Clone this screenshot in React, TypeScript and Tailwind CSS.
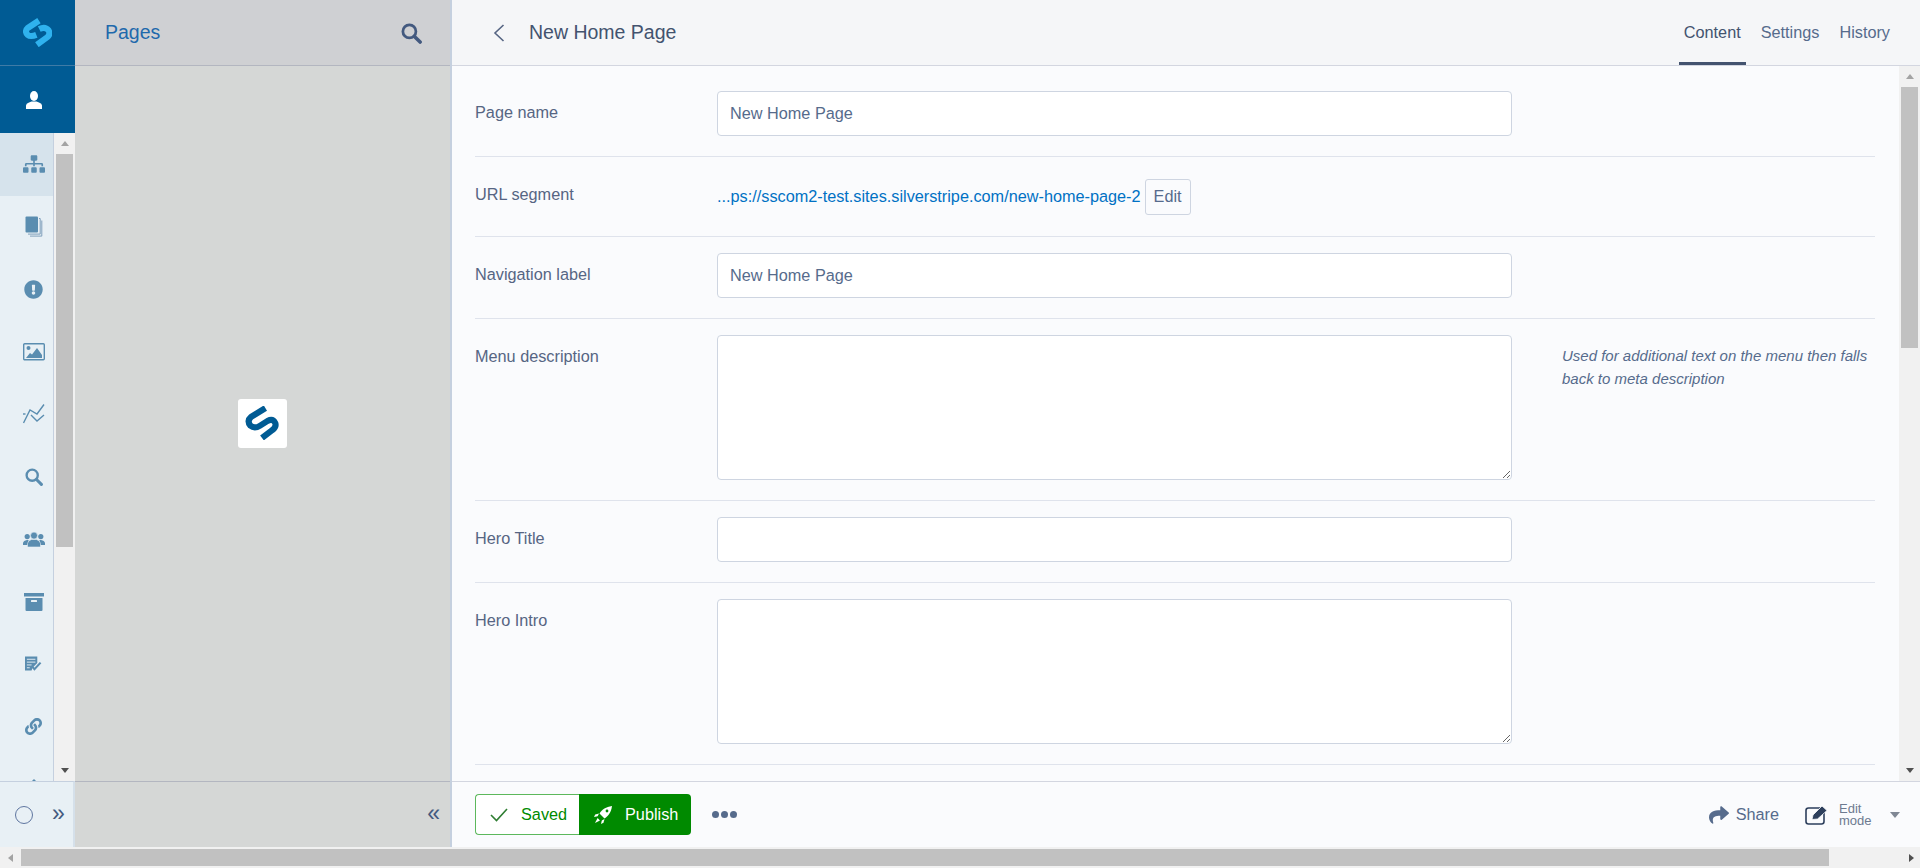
import React from 'react';
import { FaSitemap, FaExclamationCircle, FaLink, FaShare, FaArrowUp } from 'react-icons/fa';

const TopLogo = () => (
  <svg viewBox="0 0 100 100" className="w-[29px] h-[29px]" fill="none" stroke="#2fb2ee" strokeWidth="21" strokeLinejoin="round">
    <path d="M55 9 L17 34 Q4 46 16 58 Q26 66 46 58" />
    <path d="M56 38 Q76 28 88 42 Q96 56 84 66 L48 92" />
  </svg>
);

const PanelLogo = () => (
  <svg viewBox="0 0 100 100" className="w-[34px] h-[34px]" fill="none" stroke="#005b94" strokeWidth="18" strokeLinejoin="round">
    <path d="M60 6 L18 32 Q4 44 16 58 Q28 68 44 58 L66 44 Q82 36 89 50 Q93 62 80 71 L50 94" />
  </svg>
);

const PagesIcon = () => (
  <svg viewBox="0 0 18 21" className="w-[18px] h-[21px]">
    <rect x="0.5" y="0.5" width="12.5" height="16" rx="1" fill="#5a8db0" />
    <path d="M14 2.5h1.2v15.6H3M16.8 4.5v15.6H5" fill="none" stroke="#7f9fbb" strokeWidth="1" />
  </svg>
);

const ImageIcon = () => (
  <svg viewBox="0 0 22 18" className="w-[22px] h-[18px]">
    <rect x="0.7" y="0.7" width="20.6" height="16" rx="1" fill="none" stroke="#5a8db0" strokeWidth="1.4" />
    <circle cx="5.5" cy="5" r="2" fill="#5a8db0" />
    <path d="M3 15 L7 10 L9 11.5 L14 5 L19 12 V15Z" fill="#5a8db0" />
  </svg>
);

const ChartIcon = () => (
  <svg viewBox="0 0 22 20" className="w-[22px] h-[20px]" fill="none" stroke="#5a8db0" strokeWidth="1.4">
    <path d="M0.5 19 L7 6 L14 10 L21 0.5" />
    <path d="M8 11 L14 17 L21 11" />
    <path d="M0 10 H2.5" />
  </svg>
);

const SearchIcon = ({ color, className }: { color: string; className: string }) => (
  <svg viewBox="0 0 20 20" className={className} fill="none" stroke={color}>
    <circle cx="8" cy="8" r="6.2" strokeWidth="2.6" />
    <path d="M12.8 12.8 L18.2 18.2" strokeWidth="3.4" strokeLinecap="round" />
  </svg>
);

const UsersIcon = () => (
  <svg viewBox="0 0 22 15" className="w-[22px] h-[15px]" fill="#5a8db0">
    <circle cx="4.2" cy="4.6" r="2.6" />
    <circle cx="17.8" cy="4.6" r="2.6" />
    <path d="M0 13 V11 Q0.5 8.5 4 8 L5.5 8 V13Z" />
    <path d="M22 13 V11 Q21.5 8.5 18 8 L16.5 8 V13Z" />
    <circle cx="11" cy="3.6" r="3.5" stroke="#e8f0f5" strokeWidth="0.6" />
    <path d="M4.5 15 V11.5 Q5 8.5 8.5 7.5 H13.5 Q17 8.5 17.5 11.5 V15Z" stroke="#e8f0f5" strokeWidth="0.6" />
  </svg>
);

const ArchiveIcon = () => (
  <svg viewBox="0 0 20 18" className="w-[20px] h-[18px]">
    <rect x="0" y="0" width="20" height="3.5" fill="#5a8db0" />
    <path d="M1.5 5 H18.5 V17 Q18.5 18 17.5 18 H2.5 Q1.5 18 1.5 17Z" fill="#5a8db0" />
    <rect x="7" y="7" width="6" height="2" rx="0.5" fill="#e8f0f5" />
  </svg>
);

const ReportIcon = () => (
  <svg viewBox="0 0 18 16" className="w-[17px] h-[16px]">
    <path d="M0 0 H13 V7 L8 12 L7 15 H0Z" fill="#5a8db0" />
    <path d="M2 3h9M2 6h9M2 9h5M2 12h3" stroke="#e8f0f5" strokeWidth="1" />
    <path d="M7 10 L10 13.5 L16.5 6.5" fill="none" stroke="#5a8db0" strokeWidth="2.2" />
  </svg>
);

const ProfileIcon = () => (
  <svg viewBox="0 0 16 18" className="w-[16px] h-[18px]" fill="#ffffff">
    <ellipse cx="8" cy="5" rx="4" ry="5" />
    <path d="M0 18 V14.5 Q0 12.5 3 11.5 L5.5 10.5 H10.5 L13 11.5 Q16 12.5 16 14.5 V18Z" />
  </svg>
);

const RocketIcon = () => (
  <svg viewBox="0 0 18 18" className="w-[18px] h-[18px] mr-[13px]" fill="#ffffff">
    <path d="M18 0 C12 0.8 8 3.5 5.5 7.5 L10.5 12.5 C14.5 10 17.2 6 18 0Z" />
    <circle cx="13" cy="5" r="1.4" fill="#008a00" />
    <path d="M5 7.5 L1.2 8.5 L0 11 L3.6 10.2Z" />
    <path d="M10.5 13 L9.5 16.8 L7 18 L7.8 14.4Z" />
    <path d="M3.6 12 L6 14.4 L1 17Z" />
  </svg>
);

const ArrowUp = ({ color }: { color: string }) => (
  <div className="w-0 h-0 border-x-[4.5px] border-x-transparent border-b-[5px]" style={{ borderBottomColor: color }} />
);
const ArrowDown = () => (
  <div className="w-0 h-0 border-x-[4.5px] border-x-transparent border-t-[5px] border-t-[#505050]" />
);

const menuIcons = [
  <FaSitemap size={22} color="#5a8db0" />,
  <PagesIcon />,
  <FaExclamationCircle size={19} color="#5a8db0" />,
  <ImageIcon />,
  <ChartIcon />,
  <SearchIcon color="#5a8db0" className="w-[18px] h-[18px]" />,
  <UsersIcon />,
  <ArchiveIcon />,
  <ReportIcon />,
  <FaLink size={17} color="#5a8db0" />,
  <FaArrowUp size={22} color="#5a8db0" />,
];

const LeftMenu = () => (
  <div className="w-[75px] flex flex-col shrink-0">
    <div className="h-[66px] bg-[#005b94] border-b border-[#3f7ba6] flex items-center justify-center shrink-0 pr-[1px]">
      <TopLogo />
    </div>
    <div className="h-[67px] bg-[#005b94] flex items-center pl-[26px] shrink-0">
      <ProfileIcon />
    </div>
    <div className="flex-1 flex min-h-0 overflow-hidden bg-[#e8f0f5]">
      <div className="w-[54px] border-r border-[#c5d0df] overflow-hidden">
        {menuIcons.map((icon, i) => (
          <div
            key={i}
            className={`h-[62.5px] flex items-center justify-center pl-[14px] ${i === 0 ? 'bg-[#d6e3ec]' : ''}`}
          >
            {icon}
          </div>
        ))}
      </div>
      <div className="w-[21px] bg-[#f1f1f1] flex flex-col items-center pt-[8px] relative">
        <ArrowUp color="#a3a3a3" />
        <div className="w-[17px] h-[393px] bg-[#c1c1c1] mt-[8px]" />
        <div className="flex-1" />
        <div className="pb-[8px]"><ArrowDown /></div>
      </div>
    </div>
    <div className="h-[66px] bg-[#e8f0f5] border-t border-[#c5d0df] flex items-center shrink-0 border-r-2 border-r-[#d5e0ea]">
      <div className="w-[18px] h-[18px] rounded-full border border-[#5f76a0] ml-[15px]" />
      <span className="ml-[19px] text-[#43597f] text-[23px] leading-none -mt-[3px]">»</span>
    </div>
  </div>
);

const PagesPanel = () => (
  <div className="w-[377px] flex flex-col shrink-0 border-r-2 border-[#c5d0df] bg-[#d5d7d6]">
    <div className="h-[66px] bg-[#cfd0d3] border-b border-[#b3b6c0] flex items-center justify-between pl-[30px] pr-[28px] shrink-0">
      <span className="text-[19.5px] text-[#1f69ac]">Pages</span>
      <SearchIcon color="#43597f" className="w-[21px] h-[21px] mt-[2px]" />
    </div>
    <div className="flex-1 flex items-center justify-center">
      <div className="w-[49px] h-[49px] bg-white rounded-[3px] flex items-center justify-center -mt-[1px] -ml-[1px]">
        <PanelLogo />
      </div>
    </div>
    <div className="h-[66px] border-t border-[#b3b6c0] flex items-center justify-end pr-[10px] shrink-0">
      <span className="text-[#43597f] text-[23px] leading-none -mt-[3px]">«</span>
    </div>
  </div>
);

const Row = ({ label, first, children, note }: { label: string; first?: boolean; children: React.ReactNode; note?: React.ReactNode }) => (
  <div className={`flex border-b border-[#dfe3ec] pb-[20px] ${first ? 'pt-[25px]' : 'pt-[16px]'}`}>
    <div className="w-[242px] text-[16.25px] leading-[20px] pt-[11px] text-[#566583] shrink-0">{label}</div>
    {children}
    {note}
  </div>
);

const inputClass =
  'w-[795px] h-[45px] shrink-0 bg-white border border-[#ced5e1] rounded-[4px] px-[12px] text-[16.25px] text-[#566b8c] outline-none';
const areaClass =
  'w-[795px] h-[145px] shrink-0 bg-white border border-[#ced5e1] rounded-[4px] px-[12px] py-[8px] text-[16px] outline-none block';

const Main = () => (
  <div className="flex-1 min-w-0 flex flex-col">
    <div className="h-[66px] bg-[#f5f6f8] border-b border-[#d3d6e0] flex items-center shrink-0">
      <svg viewBox="0 0 12 18" className="w-[12px] h-[18px] ml-[41px]" fill="none" stroke="#566583" strokeWidth="1.6">
        <path d="M10.5 1 L2 9 L10.5 17" />
      </svg>
      <span className="ml-[24px] text-[19.5px] text-[#43536f]">New Home Page</span>
      <div className="ml-auto flex items-stretch h-[65px] pr-[30px] text-[16.25px] text-[#566b8c]">
        <span className="px-[5px] flex items-center border-b-[3px] border-[#43536f] text-[#43536f] pt-[3px]">Content</span>
        <span className="ml-[15px] flex items-center">Settings</span>
        <span className="ml-[20px] flex items-center">History</span>
      </div>
    </div>
    <div className="flex-1 min-h-0 flex bg-[#fafbfd]">
      <div className="flex-1 min-w-0 pl-[23px] pr-[24px] overflow-hidden">
        <Row label="Page name" first>
          <input readOnly value="New Home Page" className={inputClass} />
        </Row>
        <div className="flex border-b border-[#dfe3ec] h-[80px] items-center">
          <div className="w-[242px] text-[16.25px] leading-[20px] text-[#566583] shrink-0 -mt-[6px]">URL segment</div>
          <span className="text-[16.25px] text-[#0071c4]">...ps://sscom2-test.sites.silverstripe.com/new-home-page-2</span>
          <span className="ml-[4px] w-[46px] h-[36px] border border-[#ced5e1] rounded-[3px] flex items-center justify-center text-[16.25px] text-[#566b8c] bg-[#fafbfd]">Edit</span>
        </div>
        <Row label="Navigation label">
          <input readOnly value="New Home Page" className={inputClass} />
        </Row>
        <Row
          label="Menu description"
          note={
            <div className="ml-[50px] pt-[9px] w-[320px] text-[15px] leading-[23px] italic text-[#566b8c]">
              Used for additional text on the menu then falls back to meta description
            </div>
          }
        >
          <textarea readOnly className={areaClass} />
        </Row>
        <Row label="Hero Title">
          <input readOnly className={inputClass} />
        </Row>
        <Row label="Hero Intro">
          <textarea readOnly className={areaClass} />
        </Row>
      </div>
      <div className="w-[21px] bg-[#f1f1f1] flex flex-col items-center pt-[8px] shrink-0">
        <ArrowUp color="#a3a3a3" />
        <div className="w-[17px] h-[261px] bg-[#c1c1c1] mt-[8px]" />
        <div className="flex-1" />
        <div className="pb-[8px]"><ArrowDown /></div>
      </div>
    </div>
    <div className="h-[66px] bg-[#fafbfd] border-t border-[#d3d6e0] flex items-center pl-[23px] pr-[20px] shrink-0">
      <div className="flex h-[41px]">
        <div className="w-[104px] border border-r-0 border-[#5cb85c] rounded-l-[4px] bg-white flex items-center pl-[14px] text-[16.25px] text-[#008a00]">
          <svg viewBox="0 0 18 14" className="w-[18px] h-[14px] mr-[13px]" fill="none" stroke="#2f7d32" strokeWidth="1.6">
            <path d="M1 7 L6.5 12.5 L17 1" />
          </svg>
          Saved
        </div>
        <div className="w-[112px] bg-[#008a00] rounded-r-[4px] flex items-center pl-[15px] text-[16.25px] text-white">
          <RocketIcon />
          Publish
        </div>
      </div>
      <div className="flex gap-[2.5px] ml-[21px]">
        <span className="w-[6.5px] h-[6.5px] rounded-full bg-[#566b8c]" />
        <span className="w-[6.5px] h-[6.5px] rounded-full bg-[#566b8c]" />
        <span className="w-[6.5px] h-[6.5px] rounded-full bg-[#566b8c]" />
      </div>
      <div className="ml-auto flex items-center text-[#566b8c]">
        <FaShare size={20} />
        <span className="ml-[7px] text-[16.25px]">Share</span>
        <svg viewBox="0 0 24 20" className="w-[24px] h-[20px] ml-[26px]">
          <rect x="1" y="3" width="18" height="16" rx="2.5" fill="none" stroke="#2d3f5c" strokeWidth="1.6" />
          <path d="M7 14.5 L8 10 L17 1 L22 5.5 L12.5 14Z" fill="#2d3f5c" stroke="#fafbfd" strokeWidth="0.8" />
        </svg>
        <div className="ml-[10px] text-[13px] leading-[12px] w-[30px] text-[#6d7a90]">Edit mode</div>
        <div className="ml-[21px] w-0 h-0 border-x-[5px] border-x-transparent border-t-[6px] border-t-[#7f8794]" />
      </div>
    </div>
  </div>
);

const App = () => (
  <div className="w-[1920px] h-[868px] overflow-hidden flex flex-col bg-[#f1f1f1] font-['Liberation_Sans',Arial,sans-serif]">
    <div className="flex flex-1 min-h-0">
      <LeftMenu />
      <PagesPanel />
      <Main />
    </div>
    <div className="h-[21px] flex items-center shrink-0 pt-[2px] pb-[2px]">
      <div className="w-[21px] flex justify-center">
        <div className="w-0 h-0 border-y-[4.5px] border-y-transparent border-r-[5px] border-r-[#a3a3a3]" />
      </div>
      <div className="w-[1808px] h-[17px] bg-[#c1c1c1]" />
      <div className="flex-1 flex justify-end pr-[6px]">
        <div className="w-0 h-0 border-y-[4.5px] border-y-transparent border-l-[5px] border-l-[#505050]" />
      </div>
    </div>
  </div>
);

export default App;
